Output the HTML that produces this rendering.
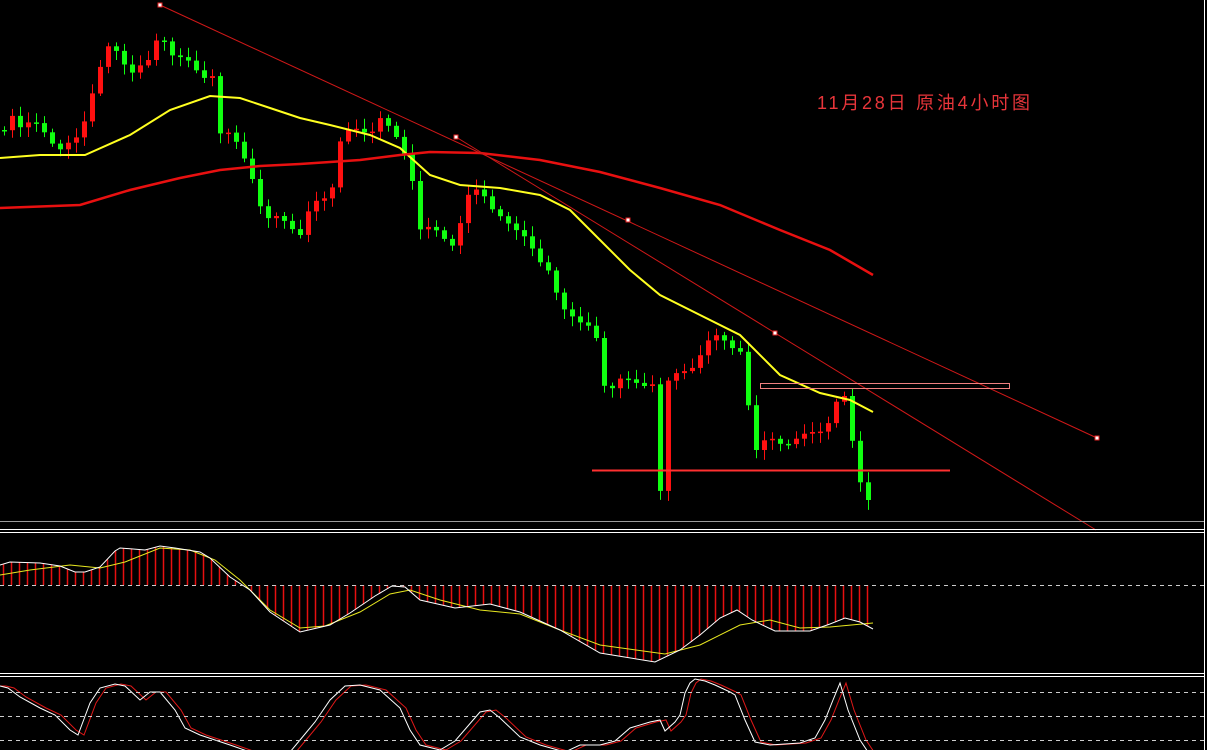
<!DOCTYPE html>
<html><head><meta charset="utf-8"><style>
html,body{margin:0;padding:0;background:#000;width:1207px;height:750px;overflow:hidden}
svg{display:block}
</style></head><body>
<svg id="s" width="1207" height="750" xmlns="http://www.w3.org/2000/svg">
<rect width="1207" height="750" fill="#000"/>
<g id="g"></g>
<line x1="0" y1="521.5" x2="1204" y2="521.5" stroke="#9a9a9a" stroke-width="1"/>
<line x1="0" y1="529.5" x2="1204" y2="529.5" stroke="#fff"/>
<line x1="0" y1="532.5" x2="1204" y2="532.5" stroke="#fff"/>
<line x1="0" y1="673.5" x2="1204" y2="673.5" stroke="#fff"/>
<line x1="0" y1="676.5" x2="1204" y2="676.5" stroke="#fff"/>
<line x1="1204.5" y1="0" x2="1204.5" y2="750" stroke="#fff"/>
<g stroke="#ccc" stroke-dasharray="4,4">
<line x1="0" y1="585.5" x2="1204" y2="585.5"/>
<line x1="0" y1="692.5" x2="1204" y2="692.5"/>
<line x1="0" y1="716.5" x2="1204" y2="716.5"/>
<line x1="0" y1="740.5" x2="1204" y2="740.5"/>
</g>
<text x="817" y="109" fill="#e8353a" font-size="18" textLength="213" lengthAdjust="spacing" font-family="'Liberation Sans','Noto Sans CJK SC',sans-serif">11月28日 原油4小时图</text>
</svg>
<script>
(function(){
var NS='http://www.w3.org/2000/svg',G=document.getElementById('g');
function el(t,a){var e=document.createElementNS(NS,t);for(var k in a)e.setAttribute(k,String(a[k]));G.appendChild(e);return e;}
function interp(p,x){if(x<=p[0][0])return p[0][1];for(var i=1;i<p.length;i++){if(x<=p[i][0]){var a=p[i-1],b=p[i];return a[1]+(b[1]-a[1])*(x-a[0])/(b[0]-a[0]);}}return p[p.length-1][1];}
function pl(p,c,w){el('polyline',{fill:'none',stroke:c,'stroke-width':w,points:p.map(function(q){return q[0]+','+q[1]}).join(' ')});}
var cp=[[3,130],[10,105],[20,125],[40,130],[60,145],[80,140],[90,100],[100,65],[110,40],[130,75],[150,60],[160,25],[168,50],[180,60],[200,75],[212,70],[216,130],[230,140],[250,165],[265,220],[290,225],[300,230],[310,205],[330,200],[340,140],[350,125],[370,135],[380,120],[395,135],[410,160],[418,230],[440,235],[455,240],[465,200],[480,195],[500,210],[515,235],[530,245],[550,270],[560,310],[575,320],[590,325],[600,345],[605,395],[620,380],[640,385],[652,380],[660,490],[668,385],[680,375],[690,365],[700,350],[710,340],[725,345],[740,345],[747,395],[755,455],[770,440],[790,440],[810,435],[825,430],[840,390],[848,400],[852,440],[857,480],[865,488],[873,520]];
var prev=130;
for(var x=4;x<=873;x+=8){
 var n=Math.sin(x*1.7)*4+Math.sin(x*0.63)*3;
 if(x>860)n=0;
 var c=interp(cp,x)+n;
 var o=prev;prev=c;
 var tp=Math.min(o,c),bt=Math.max(o,c);if(bt-tp<1.5)bt=tp+1.5;
 var wt=tp-2-Math.abs(Math.sin(x*2.3))*8,wb=bt+2+Math.abs(Math.cos(x*1.9))*8;
 var col=c<o?'rgb(255,16,16)':'rgb(16,255,16)';
 el('line',{x1:x+0.5,y1:wt.toFixed(1),x2:x+0.5,y2:wb.toFixed(1),stroke:col});
 el('rect',{x:x-2,y:tp.toFixed(1),width:5,height:(bt-tp).toFixed(1),fill:col});
}
var ye=[[0,158],[40,155],[85,155],[130,135],[170,110],[210,96],[240,98],[270,108],[300,118],[330,125],[370,135],[400,148],[430,175],[460,185],[500,188],[540,195],[570,210],[600,240],[630,270],[660,295],[700,315],[740,335],[780,375],[820,393],[850,400],[873,412]];
var re=[[0,208],[80,205],[130,190],[180,178],[220,170],[260,166],[300,164],[360,160],[400,155],[430,152],[480,153],[540,160],[600,172],[660,188],[720,205],[780,230],[830,250],[873,275]];
pl(ye,'rgb(255,255,32)',2);pl(re,'rgb(232,16,16)',2.5);
el('line',{x1:160,y1:5,x2:1097,y2:438,stroke:'rgb(208,24,24)'});
el('line',{x1:456,y1:137,x2:1096,y2:530,stroke:'rgb(208,24,24)'});
[[160,5],[456,137],[628,220],[775,333],[1097,438]].forEach(function(p){el('rect',{x:p[0]-2,y:p[1]-2,width:4,height:4,fill:'#fff',stroke:'rgb(224,32,32)'});});
el('line',{x1:592,y1:470.5,x2:950,y2:470.5,stroke:'rgb(255,48,48)','stroke-width':2});
el('rect',{x:760.5,y:383.5,width:249,height:5,fill:'none',stroke:'rgb(240,128,128)'});
var mw=[[0,565],[10,562],[40,563],[60,566],[75,572],[85,572],[100,567],[115,551],[120,548],[145,550],[160,546],[175,548],[200,552],[210,558],[230,577],[250,590],[270,612],[300,632],[330,625],[350,613],[375,596],[392,586],[405,587],[420,600],[455,608],[490,604],[520,612],[560,630],[600,653],[655,662],[680,650],[700,635],[720,618],[737,610],[752,620],[775,631],[810,631],[830,624],[845,618],[860,622],[873,629]];
var my=[[0,575],[30,570],[70,565],[100,568],[125,562],[160,548],[190,550],[215,560],[240,580],[270,610],[300,628],[325,626],[360,612],[390,594],[410,590],[440,600],[480,610],[520,614],[560,630],[600,645],[665,654],[700,645],[740,625],[770,620],[800,628],[830,627],[873,623]];
for(var x2=3;x2<=873;x2+=8){var v=interp(mw,x2);el('line',{x1:x2+0.5,y1:585,x2:x2+0.5,y2:v.toFixed(1),stroke:'rgb(230,16,16)','stroke-width':1.5});}
pl(my,'rgb(232,232,32)',1);pl(mw,'#fff',1);
var sw=[[0,686],[8,688],[20,697],[40,708],[55,715],[70,730],[78,735],[90,703],[100,688],[115,684],[125,686],[140,700],[150,692],[160,692],[175,710],[185,728],[200,735],[230,745],[250,752],[290,752],[300,740],[315,722],[330,700],[345,686],[360,685],[380,690],[400,708],[410,730],[420,745],[440,750],[455,741],[480,712],[490,710],[500,718],[520,737],[540,745],[565,752],[580,745],[600,745],[615,741],[630,728],[650,722],[660,720],[665,731],[675,722],[680,715],[685,693],[690,683],[695,679],[705,681],[715,685],[730,692],[735,695],[745,720],[755,742],[770,745],[800,743],[815,738],[825,720],[833,700],[840,683],[848,710],[860,740],[868,752]];
var sr=sw.map(function(p){return [p[0]+6,p[1]]});sr.unshift([0,686]);
pl(sr,'rgb(224,24,24)',1);pl(sw,'#fff',1);
})();
</script>
</body></html>
